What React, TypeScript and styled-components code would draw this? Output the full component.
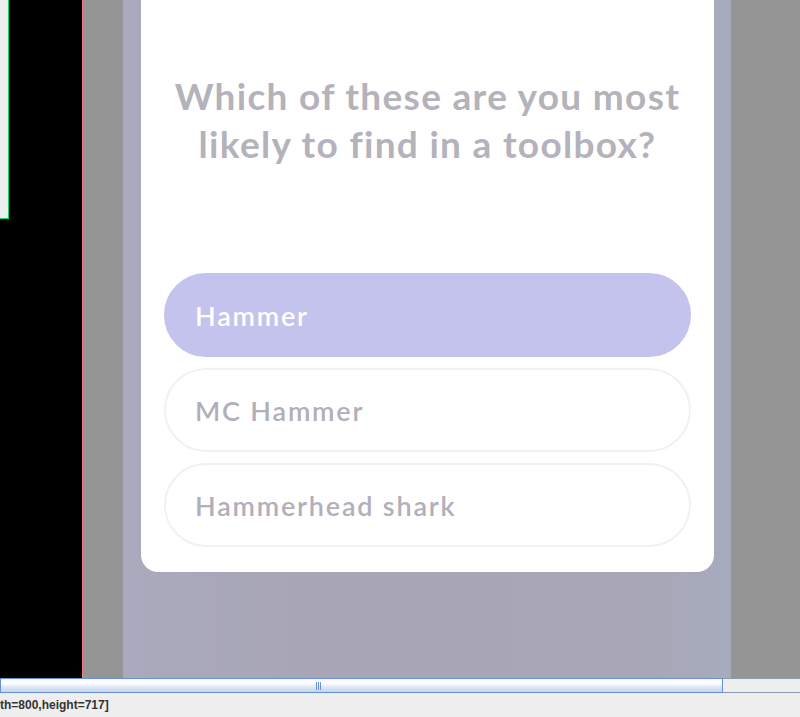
import React from "react";
import styled, { createGlobalStyle } from "styled-components";

const Global = createGlobalStyle`
  html, body { margin: 0; padding: 0; background: #000; }
  body { width: 800px; height: 717px; overflow: hidden; }
  * { box-sizing: border-box; }
`;

const Screen = styled.div`
  width: 800px;
  height: 717px;
  display: flex;
  flex-direction: column;
`;

const Stage = styled.div`
  height: 678px;
  display: flex;
`;

const DarkPane = styled.div`
  width: 83px;
  background: #000;
  border-right: 1px solid #f07a7a;
`;

const MiniPanel = styled.div`
  width: 9px;
  height: 219px;
  background: #eeeeee;
  border-right: 1px solid #00e07a;
  border-bottom: 1px solid #00e07a;
`;

const Gutter = styled.div<{ $w: number }>`
  width: ${(p) => p.$w}px;
  background: #959595;
`;

const Viewport = styled.div`
  width: 608px;
  background: linear-gradient(90deg, #aaa9bd 0%, #a8a6b6 30%, #a8a7b7 88%, #a6abbd 100%);
  padding: 0 17px 0 18px;
`;

const Card = styled.div`
  background: #fff;
  height: 572px;
  border-radius: 0 0 17px 17px;
  display: flex;
  flex-direction: column;
  padding: 72px 23px 0 23px;
`;

const Question = styled.h1`
  margin: 0;
  font-family: "Lato", "Noto Sans", sans-serif;
  font-weight: 700;
  font-size: 37px;
  line-height: 48px;
  letter-spacing: 1.3px;
  color: #b4b2bb;
  text-align: center;
`;

const Options = styled.div`
  margin-top: 105px;
  display: flex;
  flex-direction: column;
  gap: 11px;
`;

const Option = styled.div<{ $active?: boolean }>`
  height: 84px;
  border-radius: 42px;
  display: flex;
  align-items: center;
  padding-left: 29px;
  font-family: "Lato", "Noto Sans", sans-serif;
  font-weight: 600;
  font-size: 27px;
  letter-spacing: 1.8px;
  color: ${(p) => (p.$active ? "#ffffff" : "#b1afb9")};
  background: ${(p) => (p.$active ? "#c3c3ed" : "#ffffff")};
  border: 2px solid ${(p) => (p.$active ? "#c3c3ed" : "#f1f1f3")};
`;

const ScrollRow = styled.div`
  height: 15px;
  display: flex;
`;

const Thumb = styled.div`
  width: 723px;
  border: 1px solid #6b8fd6;
  background: linear-gradient(180deg, #f4f8fd 0%, #ffffff 30%, #dbe6f4 65%, #c4d4ea 100%);
  display: flex;
  align-items: center;
  padding-left: 315px;
`;

const Grip = styled.span`
  width: 1px;
  height: 8px;
  background: #6b8fd6;
  margin-right: 1px;
`;

const Track = styled.div`
  flex: 1;
  background: #eeeeee;
  border-top: 1px solid #8a9ab0;
  border-bottom: 1px solid #8a9ab0;
`;

const Status = styled.div`
  flex: 1;
  background: #eeeeee;
  font-family: "Liberation Sans", Arial, sans-serif;
  font-weight: 700;
  font-size: 12px;
  color: #333;
  padding-top: 5px;
  white-space: nowrap;
`;

export default function App() {
  return (
    <Screen>
      <Global />
      <Stage>
        <DarkPane>
          <MiniPanel />
        </DarkPane>
        <Gutter $w={40} />
        <Viewport>
          <Card>
            <Question>
              Which of these are you most
              <br />
              likely to find in a toolbox?
            </Question>
            <Options>
              <Option $active>Hammer</Option>
              <Option>MC Hammer</Option>
              <Option>Hammerhead shark</Option>
            </Options>
          </Card>
        </Viewport>
        <Gutter $w={69} />
      </Stage>
      <ScrollRow>
        <Thumb>
          <Grip />
          <Grip />
          <Grip />
        </Thumb>
        <Track />
      </ScrollRow>
      <Status>th=800,height=717]</Status>
    </Screen>
  );
}
